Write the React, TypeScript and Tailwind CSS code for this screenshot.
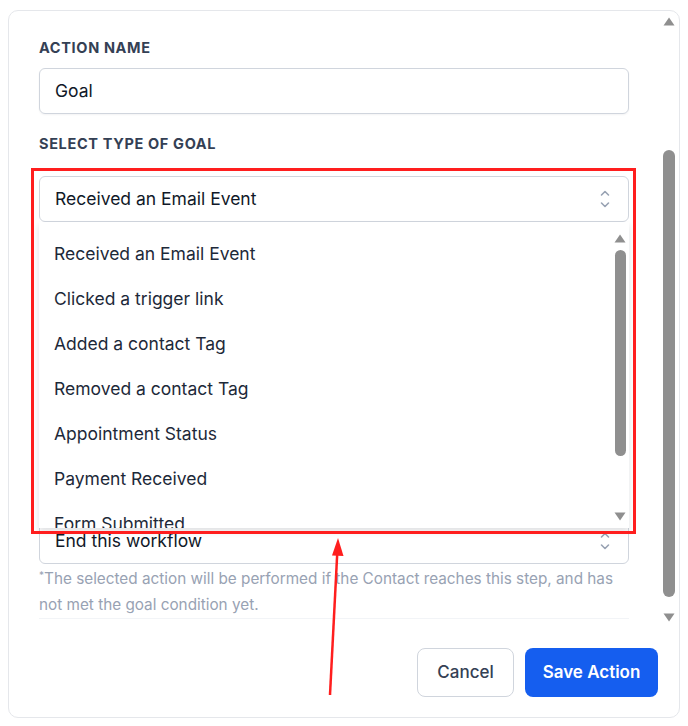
const GOAL_TYPES = [
  "Received an Email Event",
  "Clicked a trigger link",
  "Added a contact Tag",
  "Removed a contact Tag",
  "Appointment Status",
  "Payment Received",
  "Form Submitted",
];

const UpDown = () => (
  <svg width="12" height="20" viewBox="0 0 12 20" fill="none" stroke="#98a2b3" strokeWidth="1.6" strokeLinecap="round" strokeLinejoin="round">
    <path d="M2.5 6 L6 2.5 L9.5 6" />
    <path d="M2.5 14 L6 17.5 L9.5 14" />
  </svg>
);

const Tri = ({ down = false, color = "#8f8f8f" }: { down?: boolean; color?: string }) => (
  <svg width="12" height="9" viewBox="0 0 12 9">
    <path d={down ? "M0.5 0.5 H11.5 L6 8.5 Z" : "M6 0.5 L11.5 8.5 H0.5 Z"} fill={color} />
  </svg>
);

const Label = ({ children }: { children: React.ReactNode }) => (
  <div className="text-[14.5px] leading-[20px] font-bold tracking-[0.045em] text-[#344054] uppercase">{children}</div>
);

export default function App() {
  return (
    <div className="min-h-[726px] bg-white pt-[10px] pl-[8px]" style={{ fontFamily: "Inter, 'Noto Sans', sans-serif" }}>
      <div className="relative flex w-[672px] h-[708px] border border-[#e5e7eb] rounded-[10px] bg-white">
        {/* main content */}
        <div className="flex-1 flex flex-col pl-[30px] pt-[27px]">
          <Label>Action Name</Label>
          <div className="mt-[10px] w-[590px] h-[46px] border border-[#d0d5dd] rounded-[6px] flex items-center px-[15px] text-[17.5px] text-[#101828] shadow-[0_1px_2px_rgba(16,24,40,0.05)]">
            Goal
          </div>

          <div className="mt-[20px]">
            <Label>Select type of goal</Label>
          </div>

          <div className="relative mt-[22px] w-[590px]">
            <div className="h-[46px] border border-[#d0d5dd] rounded-[6px] flex items-center justify-between pl-[15px] pr-[17px] text-[17.5px] text-[#101828]">
              <span>Received an Email Event</span>
              <UpDown />
            </div>

            {/* open options list */}
            <div className="absolute z-10 left-0 top-full w-[590px] h-[306px] bg-white overflow-hidden shadow-[0_4px_6px_rgba(16,24,40,0.12)]">
              <div className="pt-[10px]">
                {GOAL_TYPES.map((t) => (
                  <div key={t} className="h-[45px] flex items-center pl-[15px] text-[17.5px] text-[#1d2939]">
                    {t}
                  </div>
                ))}
              </div>
              <div className="absolute right-[3px] top-[12px] flex flex-col items-center">
                <Tri />
                <div className="mt-[7px] w-[11px] h-[206px] rounded-full bg-[#8f8f8f]" />
                <div className="mt-[56px]">
                  <Tri down />
                </div>
              </div>
            </div>

            {/* red annotation box */}
            <div className="absolute z-20 left-[-8px] top-[-8px] w-[605px] h-[366px] border-[3px] border-[#ff1e1e] pointer-events-none" />
          </div>

          {/* hidden content under the list */}
          <div className="h-[296px]" />

          <div className="w-[590px] h-[46px] border border-[#d0d5dd] rounded-[6px] flex items-center justify-between pl-[15px] pr-[17px] text-[17.5px] text-[#101828]">
            <span>End this workflow</span>
            <UpDown />
          </div>
          <div className="mt-[2px] w-[590px] pr-[12px] border-b border-[#f2f4f7] text-[15.3px] leading-[26px] text-[#98a2b3]">
            <sup className="text-[10px]">*</sup>The selected action will be performed if the Contact reaches this step, and has not met the goal condition yet.
          </div>

          <div className="mt-[29px] flex justify-end gap-[11px] pr-[3px]">
            <button className="w-[97px] h-[49px] border border-[#d0d5dd] rounded-[8px] bg-white text-[17px] text-[#344054] font-medium">
              Cancel
            </button>
            <button className="w-[133px] h-[49px] rounded-[8px] bg-[#155eef] text-[17px] text-white font-semibold">
              Save Action
            </button>
          </div>
        </div>

        {/* page scrollbar */}
        <div className="w-[16px] mr-[2px] flex flex-col items-center pt-[6px]">
          <Tri />
          <div className="mt-[124px] w-[12px] h-[447px] rounded-full bg-[#8f8f8f]" />
          <div className="mt-[16px]">
            <Tri down />
          </div>
        </div>

        {/* red arrow */}
        <svg className="absolute z-30 left-[311px] top-[525px]" width="40" height="175" viewBox="320 536 40 175">
          <path d="M330 695 L337.3 552" stroke="#ff1e1e" strokeWidth="2.5" fill="none" />
          <path d="M338 538 L343.5 556 L332 555.5 Z" fill="#ff1e1e" />
        </svg>
      </div>
    </div>
  );
}
